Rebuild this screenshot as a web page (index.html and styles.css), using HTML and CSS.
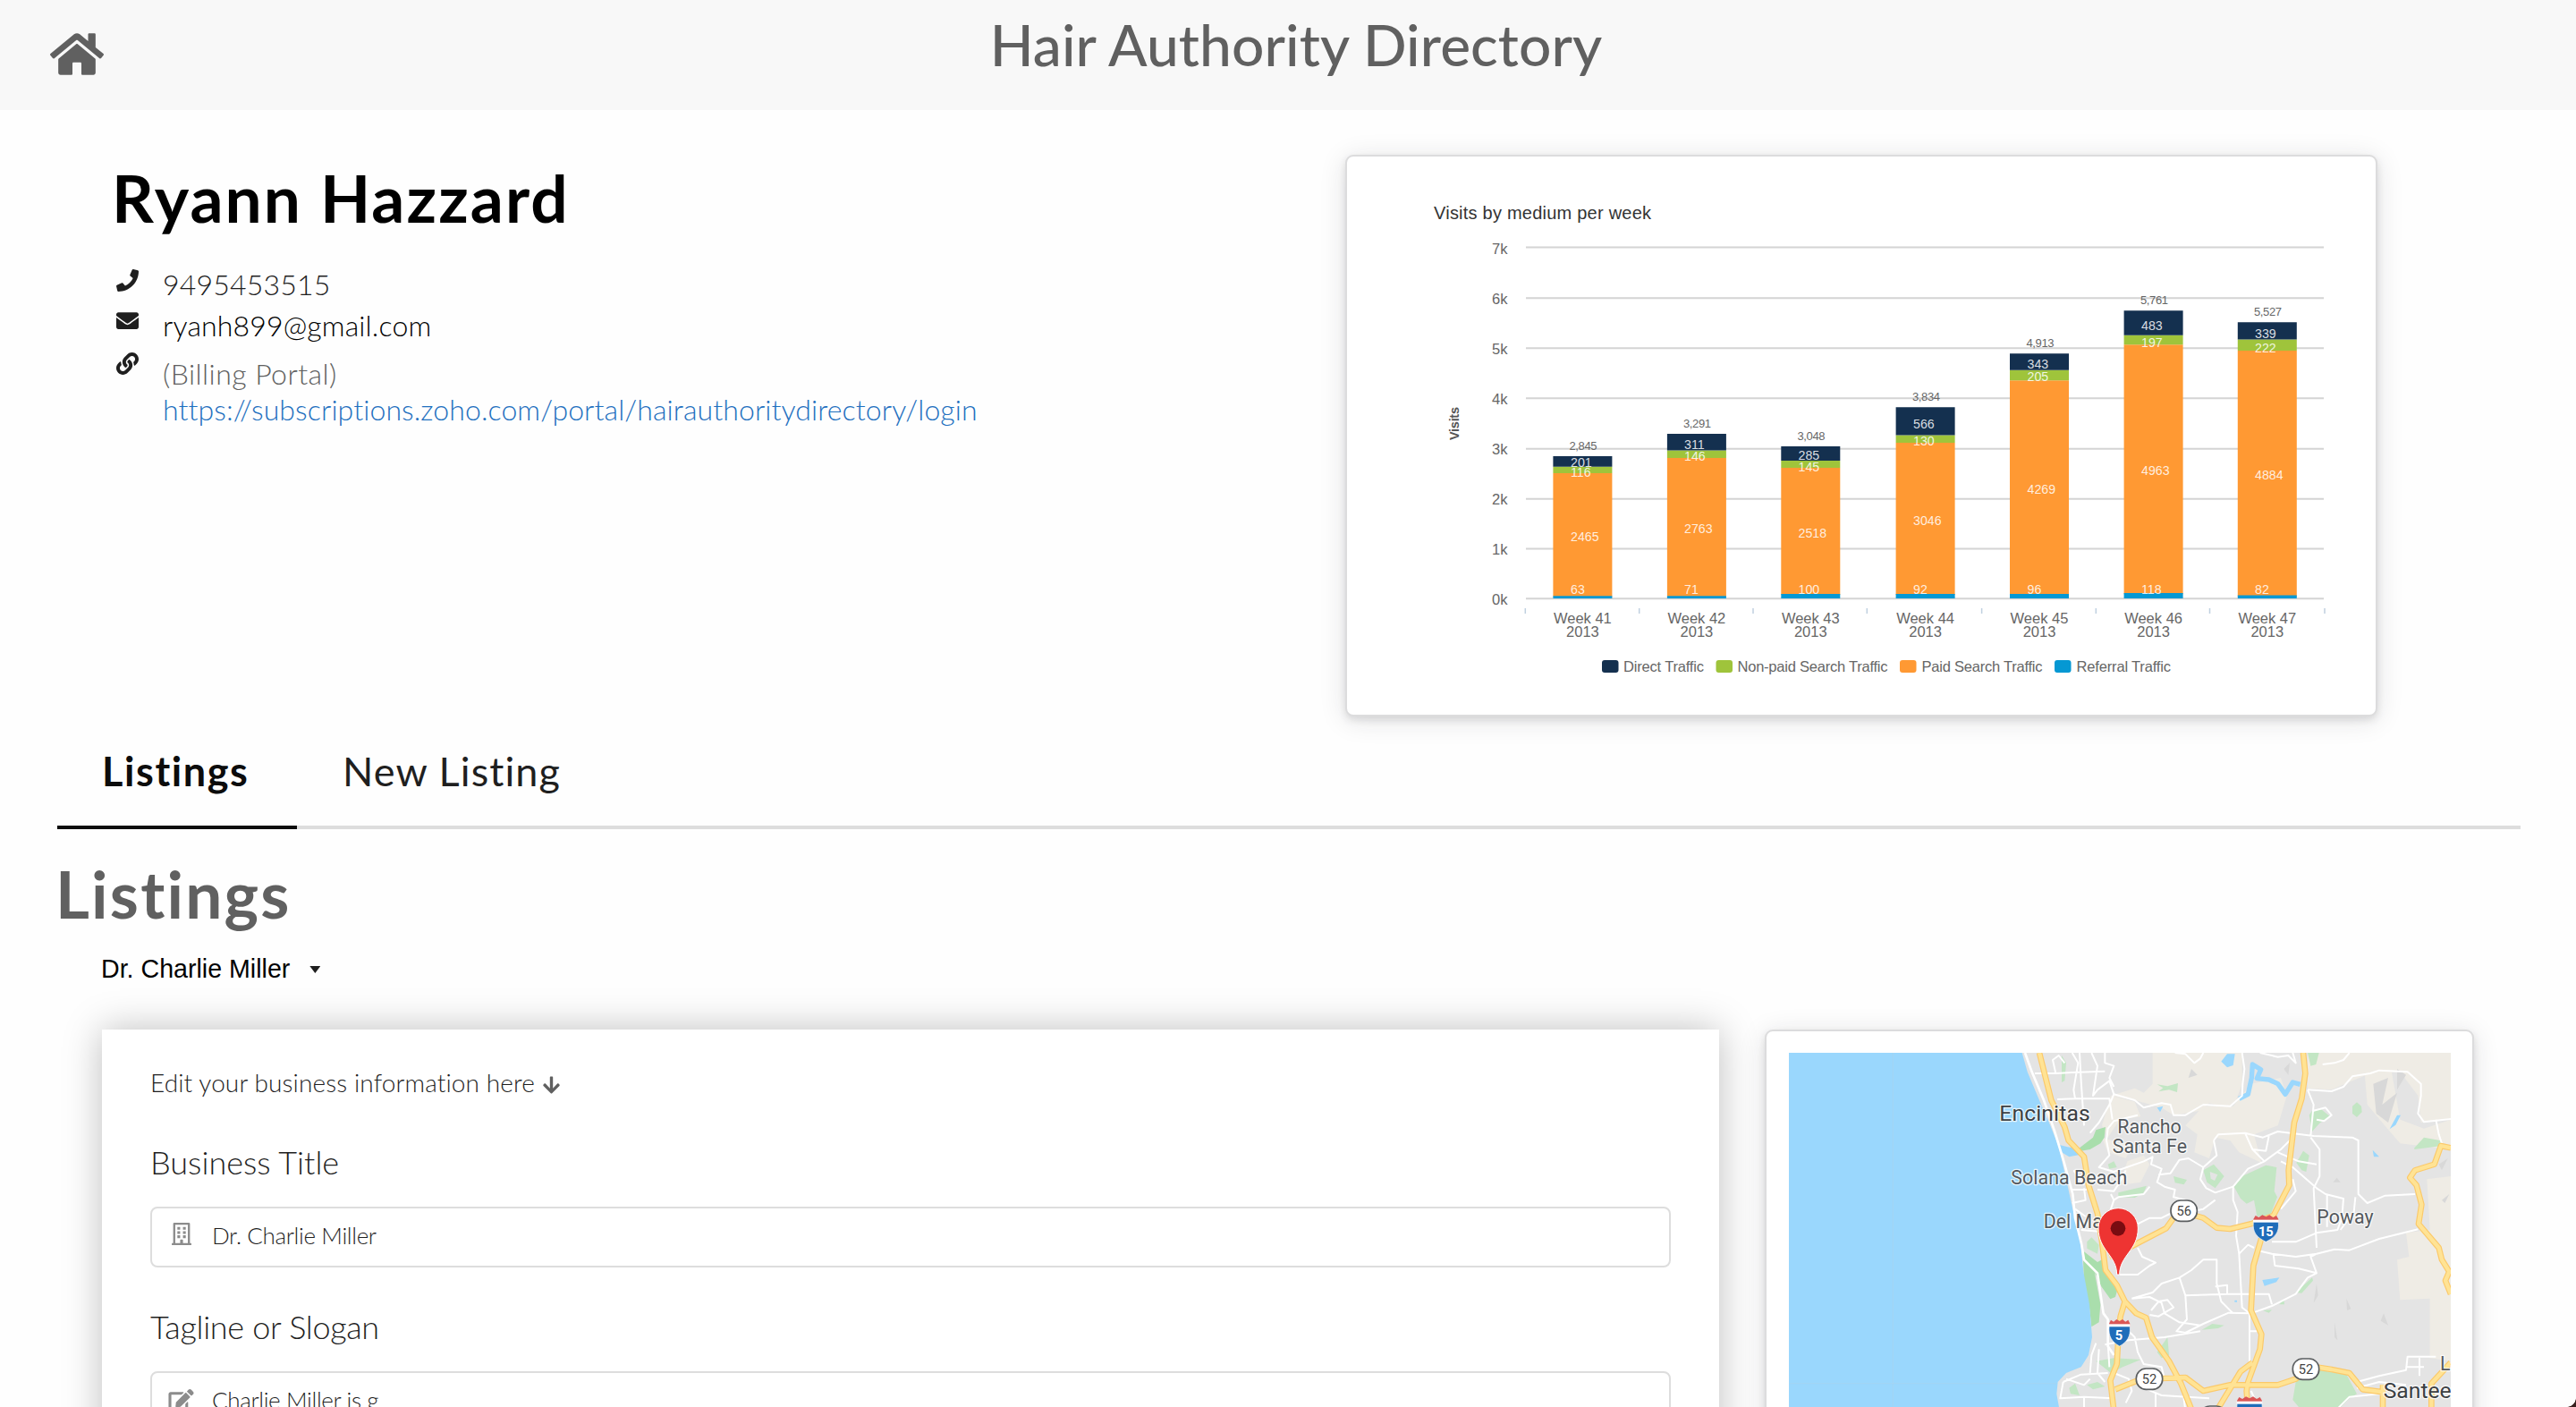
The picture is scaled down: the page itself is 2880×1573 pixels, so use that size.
FILE: index.html
```html
<!DOCTYPE html>
<html lang="en">
<head>
<meta charset="utf-8">
<title>Hair Authority Directory</title>
<link rel="stylesheet" href="styles.css">
</head>
<body>
<header class="topbar">
  <a class="home" href="#" aria-label="Home"><svg viewBox="0 32 576 448"><path d="M488 312.7V456c0 13.3-10.7 24-24 24H348c-6.6 0-12-5.4-12-12V356c0-6.6-5.4-12-12-12h-72c-6.6 0-12 5.4-12 12v112c0 6.6-5.4 12-12 12H112c-13.3 0-24-10.7-24-24V312.7c0-3.6 1.6-7 4.4-9.3l188-154.8c4.4-3.6 10.8-3.6 15.3 0l188 154.8c2.7 2.3 4.3 5.7 4.3 9.3zm83.6-60.9L488 182.9V44.4c0-6.6-5.4-12-12-12h-56c-6.6 0-12 5.4-12 12V117l-89.5-73.7c-17.7-14.6-43.3-14.6-61 0L4.4 251.8c-5.1 4.2-5.8 11.8-1.6 16.9l25.5 31c4.2 5.1 11.8 5.8 16.9 1.6l235.2-193.7c4.4-3.6 10.8-3.6 15.3 0l235.2 193.7c5.1 4.2 12.7 3.5 16.9-1.6l25.5-31c4.2-5.2 3.4-12.7-1.7-16.9z"/></svg></a>
  <div class="brand">Hair Authority Directory</div>
</header>

<section class="profile">
  <div class="person">
    <h1 class="name">Ryann Hazzard</h1>
    <ul class="contacts">
      <li class="contact phone"><svg class="ico" viewBox="0 0 512 512"><path d="M493.4 24.6l-104-24c-11.3-2.6-22.9 3.3-27.5 13.9l-48 112c-4.2 9.8-1.4 21.3 6.9 28l60.6 49.6c-36 76.7-98.9 140.5-177.2 177.2l-49.6-60.6c-6.8-8.3-18.2-11.1-28-6.9l-112 48C3.9 366.5-2 378.1.6 389.4l24 104C27.1 504.2 36.7 512 48 512c256.1 0 464-207.5 464-464 0-11.2-7.7-20.9-18.6-23.4z"/></svg><span>9495453515</span></li>
      <li class="contact mail"><svg class="ico" viewBox="0 0 512 512"><path d="M502.3 190.8c3.9-3.1 9.7-.2 9.7 4.7V400c0 26.5-21.5 48-48 48H48c-26.5 0-48-21.5-48-48V195.6c0-5 5.7-7.8 9.7-4.7 22.4 17.4 52.1 39.5 154.1 113.6 21.1 15.4 56.7 47.8 92.2 47.6 35.7.3 72-32.8 92.3-47.6 102-74.1 131.6-96.3 154-113.7zM256 320c23.2.4 56.6-29.2 73.4-41.4 132.7-96.3 142.8-104.7 173.4-128.7 5.8-4.5 9.2-11.5 9.2-18.9v-19c0-26.5-21.5-48-48-48H48c-26.5 0-48 21.5-48 48v19c0 7.4 3.4 14.3 9.2 18.9 30.6 23.9 40.7 32.4 173.4 128.7 16.8 12.2 50.2 41.8 73.4 41.4z"/></svg><span>ryanh899@gmail.com</span></li>
      <li class="contact billing"><svg class="ico" viewBox="0 0 512 512"><path d="M326.612 185.391c59.747 59.809 58.927 155.698.36 214.59-.11.12-.24.25-.36.37l-67.2 67.2c-59.27 59.27-155.699 59.262-214.96 0-59.27-59.26-59.27-155.7 0-214.96l37.106-37.106c9.84-9.84 26.786-3.3 27.294 10.606.648 17.722 3.826 35.527 9.69 52.721 1.986 5.822.567 12.262-3.783 16.612l-13.087 13.087c-28.026 28.026-28.905 73.66-1.155 101.96 28.024 28.579 74.086 28.749 102.325.51l67.2-67.19c28.191-28.191 28.073-73.757 0-101.83-3.701-3.694-7.429-6.564-10.341-8.569a16.037 16.037 0 0 1-6.947-12.606c-.396-10.567 3.348-21.456 11.698-29.806l21.054-21.055c5.521-5.521 14.182-6.199 20.584-1.731a152.482 152.482 0 0 1 20.522 17.197zM467.547 44.449c-59.261-59.262-155.69-59.27-214.96 0l-67.2 67.2c-.12.12-.25.25-.36.37-58.566 58.892-59.387 154.781.36 214.59a152.454 152.454 0 0 0 20.521 17.196c6.402 4.468 15.064 3.789 20.584-1.731l21.054-21.055c8.35-8.35 12.094-19.239 11.698-29.806a16.037 16.037 0 0 0-6.947-12.606c-2.912-2.005-6.64-4.875-10.341-8.569-28.073-28.073-28.191-73.639 0-101.83l67.2-67.19c28.239-28.239 74.3-28.069 102.325.51 27.75 28.3 26.872 73.934-1.155 101.96l-13.087 13.087c-4.35 4.35-5.769 10.79-3.783 16.612 5.864 17.194 9.042 34.999 9.69 52.721.509 13.906 17.454 20.446 27.294 10.606l37.106-37.106c59.271-59.259 59.271-155.699.001-214.959z"/></svg><span><span class="note">(Billing Portal)</span><br><a href="#">https://subscriptions.zoho.com/portal/hairauthoritydirectory/login</a></span></li>
    </ul>
  </div>
  <div class="card chart-card">
    <svg class="chart" viewBox="1506 175 1150 624">
      <text class="c-title" x="1603" y="245" textLength="243">Visits by medium per week</text>
      <path class="grid" d="M1706 276.5H2598M1706 333.2H2598M1706 389.2H2598M1706 445.2H2598M1706 501.8H2598M1706 557.8H2598M1706 613.4H2598M1706 669.2H2598"/>
      <path class="ticks" d="M1705.3 680v6M1832.7 680v6M1960 680v6M2087.3 680v6M2215.6 680v6M2343.3 680v6M2470.5 680v6M2599 680v6"/>
      <g class="axis" text-anchor="end">
        <text x="1685.5" y="284">7k</text><text x="1685.5" y="340">6k</text><text x="1685.5" y="396">5k</text><text x="1685.5" y="451.500">4k</text>
        <text x="1685.5" y="508">3k</text><text x="1685.5" y="564">2k</text><text x="1685.5" y="620">1k</text><text x="1685.5" y="675.500">0k</text>
      </g>
      <text class="c-visits" transform="translate(1631 492) rotate(-90)" textLength="37">Visits</text>
      <g class="paid">
        <path d="M1736.400 529h66v138h-66zM1863.900 512h66v155h-66zM1991.300 523h66v142h-66zM2119.600 495h66v170h-66zM2247 425.300h66v240h-66zM2374.600 385.300h66v279h-66zM2501.800 392h66v275h-66z"/>
      </g>
      <g class="organic">
        <path d="M1736.400 521.700h66v7.300h-66zM1863.900 503.500h66v8.500h-66zM1991.300 515h66v8h-66zM2119.600 486.500h66v8.500h-66zM2247 413.700h66v11.600h-66zM2374.600 374.700h66v10.600h-66zM2501.800 379.500h66v12.500h-66z"/>
      </g>
      <g class="direct">
        <path d="M1736.400 510h66v11.700h-66zM1863.900 485h66v18.500h-66zM1991.300 499h66v16h-66zM2119.600 455.300h66v31.200h-66zM2247 395.300h66v18.400h-66zM2374.600 347.300h66v27.400h-66zM2501.800 360.300h66v19.200h-66z"/>
      </g>
      <g class="referral">
        <path d="M1736.400 666.300h66v2.700h-66zM1863.900 666.300h66v2.700h-66zM1991.300 664h66v5h-66zM2119.600 664h66v5h-66zM2247 664h66v5h-66zM2374.600 663h66v6h-66zM2501.800 665.500h66v3.500h-66z"/>
      </g>
      <g class="totals">
        <text x="1754.500" y="502.700" textLength="31">2,845</text><text x="1882" y="477.700" textLength="31">3,291</text><text x="2009.500" y="491.500" textLength="31">3,048</text><text x="2138" y="448" textLength="31">3,834</text><text x="2265.500" y="388" textLength="31">4,913</text><text x="2393" y="340.300" textLength="31">5,761</text><text x="2520" y="352.700" textLength="31">5,527</text>
      </g>
      <g class="vals">
        <text x="1756" y="522">201</text><text x="1756" y="532.500">116</text><text x="1756" y="605">2465</text><text x="1756" y="664">63</text>
        <text x="1883" y="501.700">311</text><text x="1883" y="515">146</text><text x="1883" y="596">2763</text><text x="1883" y="664">71</text>
        <text x="2010.500" y="514">285</text><text x="2010.500" y="526.500">145</text><text x="2010.500" y="600.700">2518</text><text x="2010.500" y="664">100</text>
        <text x="2139" y="479">566</text><text x="2139" y="498">130</text><text x="2139" y="587">3046</text><text x="2139" y="664">92</text>
        <text x="2266.500" y="411.700">343</text><text x="2266.500" y="426.300">205</text><text x="2266.500" y="552">4269</text><text x="2266.500" y="664">96</text>
        <text x="2394" y="368.700">483</text><text x="2394" y="387.700">197</text><text x="2394" y="531">4963</text><text x="2394" y="664">118</text>
        <text x="2521" y="377.500">339</text><text x="2521" y="393.500">222</text><text x="2521" y="535.700">4884</text><text x="2521" y="664">82</text>
      </g>
      <g class="axis" text-anchor="middle">
        <text x="1769.400" y="696.500">Week 41</text><text x="1769.400" y="712">2013</text>
        <text x="1896.900" y="696.500">Week 42</text><text x="1896.900" y="712">2013</text>
        <text x="2024.300" y="696.500">Week 43</text><text x="2024.300" y="712">2013</text>
        <text x="2152.600" y="696.500">Week 44</text><text x="2152.600" y="712">2013</text>
        <text x="2280" y="696.500">Week 45</text><text x="2280" y="712">2013</text>
        <text x="2407.600" y="696.500">Week 46</text><text x="2407.600" y="712">2013</text>
        <text x="2534.800" y="696.500">Week 47</text><text x="2534.800" y="712">2013</text>
      </g>
      <rect class="direct" x="1791" y="738" width="18.500" height="14" rx="3"/>
      <rect class="organic" x="1918.500" y="738" width="18.500" height="14" rx="3"/>
      <rect class="paid" x="2124" y="738" width="18.500" height="14" rx="3"/>
      <rect class="referral" x="2297" y="738" width="18.500" height="14" rx="3"/>
      <g class="axis">
        <text x="1815" y="751.300" textLength="90">Direct Traffic</text>
        <text x="1942.500" y="751.300" textLength="168">Non-paid Search Traffic</text>
        <text x="2148.500" y="751.300" textLength="135">Paid Search Traffic</text>
        <text x="2321.500" y="751.300" textLength="105.500">Referral Traffic</text>
      </g>
    </svg>
  </div>
</section>

<main class="main">
  <nav class="tabs"><a class="tab active" href="#">Listings</a><a class="tab" href="#">New Listing</a></nav>
  <h2 class="section-title">Listings</h2>
  <div class="picker"><span>Dr. Charlie Miller</span><i class="caret"></i></div>
  <div class="columns">
    <form class="editor">
      <p class="hint">Edit your business information here <svg class="down" viewBox="0 0 448 512"><path d="M413.1 222.500l22.200 22.200c9.400 9.400 9.400 24.600 0 33.900L241 473c-9.400 9.400-24.600 9.400-33.900 0L12.700 278.600c-9.400-9.400-9.400-24.600 0-33.900l22.200-22.200c9.500-9.500 25-9.300 34.300.4L184 343.400V56c0-13.300 10.700-24 24-24h32c13.300 0 24 10.700 24 24v287.400l114.800-120.500c9.300-9.800 24.800-10 34.300-.4z"/></svg></p>
      <div class="label l-title">Business Title</div>
      <div class="input"><svg class="in-ico" viewBox="0 0 448 512"><path fill-rule="evenodd" d="M56 0H392Q416 0 416 24V464H436Q448 464 448 476V512H0V476Q0 464 12 464H32V24Q32 0 56 0zM80 48V464H192V396Q192 384 204 384H244Q256 384 256 396V464H368V48z"/><path d="M128 96h64v64h-64zM256 96h64v64h-64zM128 192h64v64h-64zM256 192h64v64h-64zM128 288h64v64h-64zM256 288h64v64h-64z"/></svg><span class="v1">Dr. Charlie Miller</span></div>
      <div class="label l-tag">Tagline or Slogan</div>
      <div class="input"><svg class="in-ico wide" viewBox="0 0 576 512"><path d="M402.600 83.200l90.200 90.200c3.800 3.800 3.800 10 0 13.800L274.400 405.600l-92.800 10.300c-12.400 1.400-22.900-9.100-21.500-21.500l10.300-92.800L388.800 83.200c3.800-3.800 10-3.800 13.800 0zm162-22.900l-48.800-48.800c-15.200-15.200-39.900-15.200-55.200 0l-35.400 35.400c-3.800 3.800-3.800 10 0 13.800l90.200 90.200c3.800 3.800 10 3.800 13.800 0l35.400-35.400c15.200-15.300 15.200-40 0-55.200zM384 346.200V448H64V128h229.800c3.200 0 6.200-1.300 8.500-3.500l40-40c7.600-7.600 2.200-20.500-8.500-20.500H48C21.500 64 0 85.500 0 112v352c0 26.500 21.500 48 48 48h352c26.500 0 48-21.500 48-48V306.200c0-10.700-12.900-16-20.500-8.500l-40 40c-2.200 2.300-3.500 5.300-3.500 8.500z"/></svg><span class="v2">Charlie Miller is g</span></div>
    </form>
    <div class="card map-card">
      <svg class="map" viewBox="-690 6 2220 1188">
        <defs>
          <g id="interstate"><path fill="#da5656" d="M-42 -16L-42 -30L-35 -42L-24 -36L-12 -44L0 -38L12 -44L24 -36L35 -42L42 -30L42 -16z"/><path fill="#fff" d="M-43 -28H43V-18H-43z"/><path fill="#1f6dba" stroke="#fff" stroke-width="2" d="M-42 -20H42C46 14 30 32 0 46C-30 32 -46 14 -42 -20z"/></g>
          <rect id="route" x="-44" y="-35" width="88" height="70" rx="33"/>
        </defs>
        <rect x="-690" y="6" width="2220" height="1200" fill="#e4e4e4"/>
        <g fill="#efece5">
          <path d="M530 6H830V110L810 165L780 190L720 175L690 200L600 215L560 190L470 165L390 150L470 125L500 140L530 110z"/>
          <path d="M860 110L960 90L980 150L950 250L870 280L895 375L820 340L790 300L740 290L720 360L670 340L680 280L640 250L700 185L800 185z"/>
          <path d="M390 150L470 170L490 220L420 230L380 290L360 250z"/>
          <path d="M445 370L500 350L520 380L490 440L420 450z"/>
          <path d="M1050 6H1530V225L1430 240L1420 150L1360 70L1260 75L1200 100L1130 130L1050 125z"/>
          <path d="M1240 60L1330 60L1360 230L1440 260L1530 230V330L1360 310L1300 240L1250 180z"/>
          <path d="M1450 430L1530 420V1040L1460 1030V830L1360 835L1350 700L1390 690L1380 610L1460 600z"/>
          <path d="M360 290L460 320L440 360L380 340z"/>
        </g>
        <g fill="#d8d8d8">
          <path d="M1270 110L1320 90L1300 180L1350 140L1320 240L1280 210zM1350 60L1380 80L1350 130zM1080 780L1085 820L1070 845zM1180 830L1195 865L1182 870zM1305 880L1320 920L1295 905zM1140 910L1150 970L1140 960zM1135 440L1148 425L1160 440zM1490 380L1520 360L1500 400zM1500 500L1525 480L1510 510zM660 60L680 80L650 90zM970 60L990 40L985 80z"/>
        </g>
        <g fill="#c3e6c4">
          <path d="M803 455L830 420L910 383L946 390L938 470L948 490L925 550L880 555L870 500L845 512L825 495z"/>
          <path d="M1040 1078L1090 1070L1180 1085L1215 1150L1190 1165L1150 1206H1030L1000 1170L1010 1110z"/>
          <path d="M415 475L510 452L500 475L470 492L415 490z"/>
          <path d="M310 640L325 625L350 650L345 680L310 662z"/>
          <path d="M545 112L580 118L615 108L612 138L585 130L550 136L565 124z"/>
          <path fill-rule="evenodd" d="M700 400L735 380L770 420L740 460L712 440zM722 405L748 415L738 435L725 428z"/>
          <path d="M600 420L645 432L635 448L605 442z"/>
          <path d="M1055 215L1065 200L1095 195L1125 220L1090 242L1065 270z"/>
          <path d="M1200 185L1215 172L1230 185L1232 205L1215 222L1200 210z"/>
          <path d="M1408 325L1440 290L1495 300L1500 318L1408 330z"/>
          <path d="M1012 375L1035 335L1055 350L1045 405L1030 400z"/>
          <path d="M695 935L730 915L770 920L750 930z"/>
          <path d="M545 1010L580 960L585 1020L560 1030z"/>
          <path d="M1050 6H1088L1078 45L1060 50z"/>
          <path d="M225 15L240 40L235 100L225 105z"/>
          <path d="M380 380L400 370L410 390L385 395z"/>
          <path d="M250 1130L270 1115L285 1155L255 1150zM340 1040L400 1030L490 1035L430 1060L390 1080zM310 1120L345 1110L370 1125L330 1135z"/>
          <path d="M900 870L930 868L920 878zM955 850L970 832L972 850zM1010 810L1065 760L1068 770L1030 812z"/>
        </g>
        <path fill="#a9deac" d="M285 325L330 290L340 265L372 255L368 290L355 310L320 330L290 335z"/>
        <path fill="#a9deac" d="M296 670L345 708L360 700L380 745L412 800L405 825L388 832L358 790L335 740L355 850L350 910L325 925L318 860L300 780z"/>
        <path fill="#9ad7fd" d="M-690 6H92L110 70L150 165L185 245L215 320L240 430L262 530L285 610L298 740L318 850L327 960L315 1020L290 1060L240 1080L212 1110L208 1150L218 1206H-690z"/>
        <g fill="#9ad7fd">
          <path d="M218 315L245 322L290 330L300 345L250 355L225 340z"/>
          <path d="M760 35L780 10L806 10L800 48L780 55z"/>
          <path d="M1325 262L1350 215L1362 215L1345 248zM1268 332L1290 355L1272 355zM545 190L565 185L555 205zM898 768L955 760L945 775L905 788zM805 836h8v6h-8z"/>
        </g>
        <path fill="none" stroke="#9ad7fd" stroke-width="16" stroke-linejoin="round" d="M820 160L850 145L862 90L865 45L893 62L880 92L920 96L950 110L975 145L1000 105L1025 112"/>
        <g fill="none" stroke="#fff" stroke-width="6" stroke-linejoin="round">
          <path stroke-width="8" d="M102 6L125 70L165 165L200 265L232 370L262 480L270 560L292 650L300 700L345 745L365 880L380 900V990L400 1020"/>
          <path d="M135 75H205L260 72L370 68M205 75L195 30L215 15L235 40M260 6L280 40L265 130L270 160L210 162M285 6L290 100L300 250M325 6L345 50L330 150L345 130L385 100L400 145L385 180L350 240L320 275M370 6V40L400 50L385 90L400 120M270 160H385L395 230"/>
          <path d="M400 145L470 165L500 190L560 175L590 180L600 215L640 215L700 180L790 185L830 150L832 110L838 60L830 6M480 215L440 225L400 235L380 260L375 300L385 350L350 390L400 405L500 370L530 355L525 380L560 395L545 440L570 455L605 465L600 490L640 500"/>
          <path d="M605 6L640 10L670 40L690 25L700 6M890 6L950 20L985 15L1010 40L1000 6M1100 45L1140 40L1170 30L1190 6M1050 130L1130 135L1170 120L1200 85L1260 75L1290 65L1385 70L1430 110L1430 150L1420 210L1440 238L1530 228M1480 230L1490 280L1500 310"/>
          <path d="M735 300L750 280L840 275L900 290L950 270L1070 285L1200 290L1220 300V480L1250 510L1310 485L1410 480M735 300L745 350L700 390L690 430L710 460L740 475L800 455L850 395L905 370L960 330L1000 290M840 275L865 330L905 370M865 330L910 335L920 285M700 390L650 360L620 365L590 410L550 415M800 455V500L815 540L810 620L820 680L830 860L855 880V1040M1060 290L1090 330V420L1070 460L1080 660M960 370L1000 390L1080 460L1110 480L1170 495L1165 560L1150 600L1080 610L1010 640L930 640M950 340L1020 370L1080 380M1000 430L1010 470L960 530M1060 285L1070 180L1050 130M1070 200L1110 190L1130 215L1105 235L1080 230M1210 490L1205 540L1160 600M1115 480V590"/>
          <path d="M885 670L930 680L1010 690L1080 680L1140 665L1190 668L1290 630L1420 598M935 680L940 720L1020 730L1080 745L1060 690L1080 680M1080 745L1050 760L1010 815L930 855L860 880L785 878L700 915L640 945L610 940L645 900L640 820L620 760L560 780L530 810L460 830M620 760L660 735L700 700L745 700V780L760 840L800 880M640 820L780 815H920L930 850M460 830L520 825L560 845L570 880L620 910L690 920M480 660L495 690L540 710L520 720L480 750L420 750M480 580L520 560L560 560L600 540M650 540L700 530L740 500M740 790L780 785L780 815M570 960L450 970L370 985M690 940L570 960M525 870L550 840L580 835L600 860L550 890L520 885M820 680L850 650L870 660M855 940H880M450 940L470 960L480 1010L500 1050L560 1060L570 1100"/>
          <path d="M340 980L325 1020L320 1080M380 980L385 1060M350 1000L345 1080L370 1110M230 1110L290 1085L380 1080M230 1110L220 1165L300 1160L400 1165M240 1100L300 1120L320 1100M400 1080L450 1100L460 1140L440 1180M500 1130L560 1155L720 1165M540 1150V1206M630 1130L640 1206M860 1140L890 1206M300 1160V1206M1215 1110L1290 1090L1380 1070L1385 1025H1480M1380 1060H1440M1425 1030V1090M1215 1130L1290 1110L1380 1120M1150 1200L1190 1160L1290 1150"/>
          <path d="M265 400L300 450M255 465H310M260 510L305 500L300 460M270 530L305 555M345 465L400 470L420 440L440 400M400 500L415 490L500 480L520 455M380 560L400 500L390 480M290 600L350 605"/>
        </g>
        <g fill="none" stroke-linejoin="round">
          <path stroke="#fbc96a" stroke-width="20" d="M150 6L190 165L235 255L248 300L300 355L315 450L345 545L360 640L372 735L410 785L437 840L422 890L415 960L410 1050L388 1105L400 1206M437 840L475 880L508 895L528 960L585 1040L625 1115L662 1206M385 690L440 665L575 595L600 560M665 550L700 560L745 593L790 597L860 580L935 552L988 450L986 400L1005 240L1030 160L1042 75L1035 6M900 610L868 720L860 870L895 950L890 1000L850 1110L845 1140L850 1206M405 1135L480 1105L560 1098L640 1095L700 1140L790 1120H950L1010 1100L1045 1070M1045 1055L1130 1068L1190 1080L1235 1135L1310 1145M865 1045L825 1075L745 1206M1530 325L1497 318L1475 380L1410 400L1393 425L1415 450L1432 515L1422 580L1490 660L1500 700L1525 740L1512 770L1530 815M1530 1045L1465 1115V1206M1302 1120V1206"/>
          <path stroke="#ffe394" stroke-width="13" d="M150 6L190 165L235 255L248 300L300 355L315 450L345 545L360 640L372 735L410 785L437 840L422 890L415 960L410 1050L388 1105L400 1206M437 840L475 880L508 895L528 960L585 1040L625 1115L662 1206M385 690L440 665L575 595L600 560M665 550L700 560L745 593L790 597L860 580L935 552L988 450L986 400L1005 240L1030 160L1042 75L1035 6M900 610L868 720L860 870L895 950L890 1000L850 1110L845 1140L850 1206M405 1135L480 1105L560 1098L640 1095L700 1140L790 1120H950L1010 1100L1045 1070M1045 1055L1130 1068L1190 1080L1235 1135L1310 1145M865 1045L825 1075L745 1206M1530 325L1497 318L1475 380L1410 400L1393 425L1415 450L1432 515L1422 580L1490 660L1500 700L1525 740L1512 770L1530 815M1530 1045L1465 1115V1206M1302 1120V1206"/>
        </g>
        <g stroke="#a9d3ee" stroke-width="2"><path d="M-341 6V1206M-690 1115H208"/></g>
        <g class="places">
          <text x="16" y="233" textLength="304" font-size="74" class="city">Encinitas</text>
          <text x="412" y="276" textLength="214">Rancho</text>
          <text x="395" y="341" textLength="250">Santa Fe</text>
          <text x="55" y="446" textLength="390">Solana Beach</text>
          <text x="164" y="595" textLength="220">Del Mar</text>
          <text x="1081" y="578" textLength="190">Poway</text>
          <text x="1304" y="1163" textLength="228" class="city">Santee</text>
          <text x="1494" y="1072">La</text>
        </g>
        <g fill="#fff" stroke="#5b5e60" stroke-width="5"><use href="#route" x="635" y="536"/><use href="#route" x="519" y="1100"/><use href="#route" x="1044" y="1067"/><use href="#route" x="733" y="1226"/></g>
        <use href="#interstate" x="910" y="594"/>
        <use href="#interstate" transform="translate(419 944) scale(.83 1)"/>
        <use href="#interstate" x="855" y="1203"/>
        <g class="shield-no"><text x="635" y="551">56</text><text x="519" y="1115">52</text><text x="1044" y="1082">52</text></g>
        <g class="shield-no inter"><text x="910" y="620">15</text><text x="417" y="969">5</text></g>
        <path fill="#ee3432" stroke="#fff" stroke-width="3" d="M410 750C410 685 348 670 348 594A66.500 67 0 0 1 481 594C481 670 419 685 419 750Z"/>
        <circle cx="414" cy="595" r="25" fill="#790c11"/>
      </svg>
    </div>
  </div>
</main>
<div class="corner"></div>
</body>
</html>
```
FILE: styles.css
```css
* { box-sizing: border-box; }
html { height: 1573px; overflow: hidden; background: #fefefe; }
body { margin: 0; width: 2880px; height: 1573px; overflow: hidden; background: #fefefe; font-family: Lato, "Open Sans", sans-serif; font-weight: 300; font-variant-ligatures: none; color: #1f1f1f; }
a { color: inherit; text-decoration: none; }
svg { display: block; }

.topbar { display: grid; grid-template-columns: 60px 1fr 42px; height: 123px; padding: 0 56px; background: #f8f8f8; color: #606060; }
.home { padding-top: 37px; }
.home svg { width: 60px; height: 47px; fill: #606060; }
.brand { font-size: 64px; line-height: 100px; font-weight: 500; text-align: center; letter-spacing: .1px; }

.profile { display: flex; justify-content: space-between; height: 679px; padding: 50px 222px 0 128px; }
.name { margin: 4px 0 0 -3px; font-size: 73px; line-height: 88px; font-weight: 700; color: #000; letter-spacing: 2.1px; white-space: nowrap; }
.contacts { list-style: none; margin: 30px 0 0; padding: 0 0 0 2px; font-size: 32px; }
.contact { display: flex; gap: 27px; line-height: 46px; }
.ico { width: 25px; height: 25px; fill: #1f1f1f; }
.phone { letter-spacing: .2px; }
.phone .ico { margin-top: 6px; }
.mail { color: #000; letter-spacing: .15px; }
.mail .ico { margin-top: 5px; }
.billing { margin-top: 11px; line-height: 40px; color: #606060; }
.billing .ico { margin-top: -4px; }
.billing .note { letter-spacing: .45px; }
.billing a { color: #1e70bf; letter-spacing: .1px; }

.card { background: #fff; border: 2px solid #dcdcdd; border-radius: 9px; box-shadow: 0 4px 8px rgba(34,36,38,.12), 0 4px 30px rgba(34,36,38,.12); }
.chart-card { width: 1154px; height: 628px; }
.chart { width: 1150px; height: 624px; font-family: "Liberation Sans", Arial, sans-serif; font-weight: 400; }
.c-title { font-size: 20px; fill: #333; }
.c-visits { font-size: 14.5px; font-weight: 700; fill: #555; }
.grid { stroke: #d4d4d4; stroke-width: 2; }
.ticks { stroke: #c0d0e0; stroke-width: 1.5; }
.axis { font-size: 16.5px; fill: #666; }
.totals { font-size: 13px; fill: #666; }
.vals { font-size: 14.2px; fill: #fff; fill-opacity: .85; }
.direct { fill: #14304f; }
.organic { fill: #9fc43b; }
.paid { fill: #ff9933; }
.referral { fill: #0598d3; }

.main { padding: 30px 62px 0 64px; }
.tabs { display: flex; height: 95px; font-size: 45px; line-height: 60px; box-shadow: inset 0 -4px #ddd; }
.tab { padding: 0 51px; font-weight: 400; letter-spacing: 1.1px; white-space: nowrap; }
.tab.active { width: 268px; padding-left: 50px; border-bottom: 4px solid #0c0c0c; font-weight: 700; letter-spacing: 1.6px; color: #0c0c0c; }
.section-title { margin: 32px 0 0 -2px; font-size: 73px; line-height: 80px; font-weight: 700; color: #606060; letter-spacing: 2.2px; }
.picker { display: flex; margin: 24px 0 0 49px; font: 400 28.6px/40px "Liberation Sans", Arial, sans-serif; color: #000; }
.caret { width: 12px; height: 8px; margin: 17px 0 0 22px; background: #1f1f1f; clip-path: polygon(0 0, 100% 0, 50% 100%); }
.columns { display: flex; justify-content: space-between; align-items: flex-start; margin: 48px 52px 0 50px; }
.editor { width: 1808px; height: 520px; padding: 41px 54px 0; background: #fff; box-shadow: 0 0 40px rgba(0,0,0,.25); }
.hint { display: flex; gap: 9px; margin: 0; font-size: 28px; line-height: 36px; letter-spacing: .12px; }
.down { width: 19px; height: 22px; margin-top: 10px; fill: #606060; }
.label { font-size: 36px; line-height: 44px; }
.l-title { margin-top: 49px; }
.l-tag { margin-top: 44px; letter-spacing: -.3px; }
.input { display: flex; width: 1700px; height: 68px; margin-top: 28px; padding: 0 22px; border: 2px solid #ddd; border-radius: 8px; font-size: 26px; line-height: 60px; letter-spacing: -.35px; }
.in-ico { width: 22px; height: 25px; margin: 16px 23px 0 0; fill: #8c8c8c; }
.in-ico.wide { width: 29px; margin: 18px 20px 0 -4px; }
.map-card { width: 793px; height: 520px; padding: 24px 0 0 25px; }
.map { width: 740px; height: 396px; font-family: Roboto, sans-serif; font-weight: 400; }
.places { font-size: 64px; fill: #54595d; stroke: #fff; stroke-width: 8px; stroke-linejoin: round; stroke-opacity: .75; paint-order: stroke; }
.places .city { font-size: 74px; fill: #3c4043; }
.shield-no { font-size: 44px; fill: #444; text-anchor: middle; }
.inter { fill: #fff; font-weight: 700; }
.corner { position: fixed; right: 0; bottom: 0; width: 10px; height: 10px; background: radial-gradient(circle at 0 0, transparent 9.5px, #38201f 10px); }
```
